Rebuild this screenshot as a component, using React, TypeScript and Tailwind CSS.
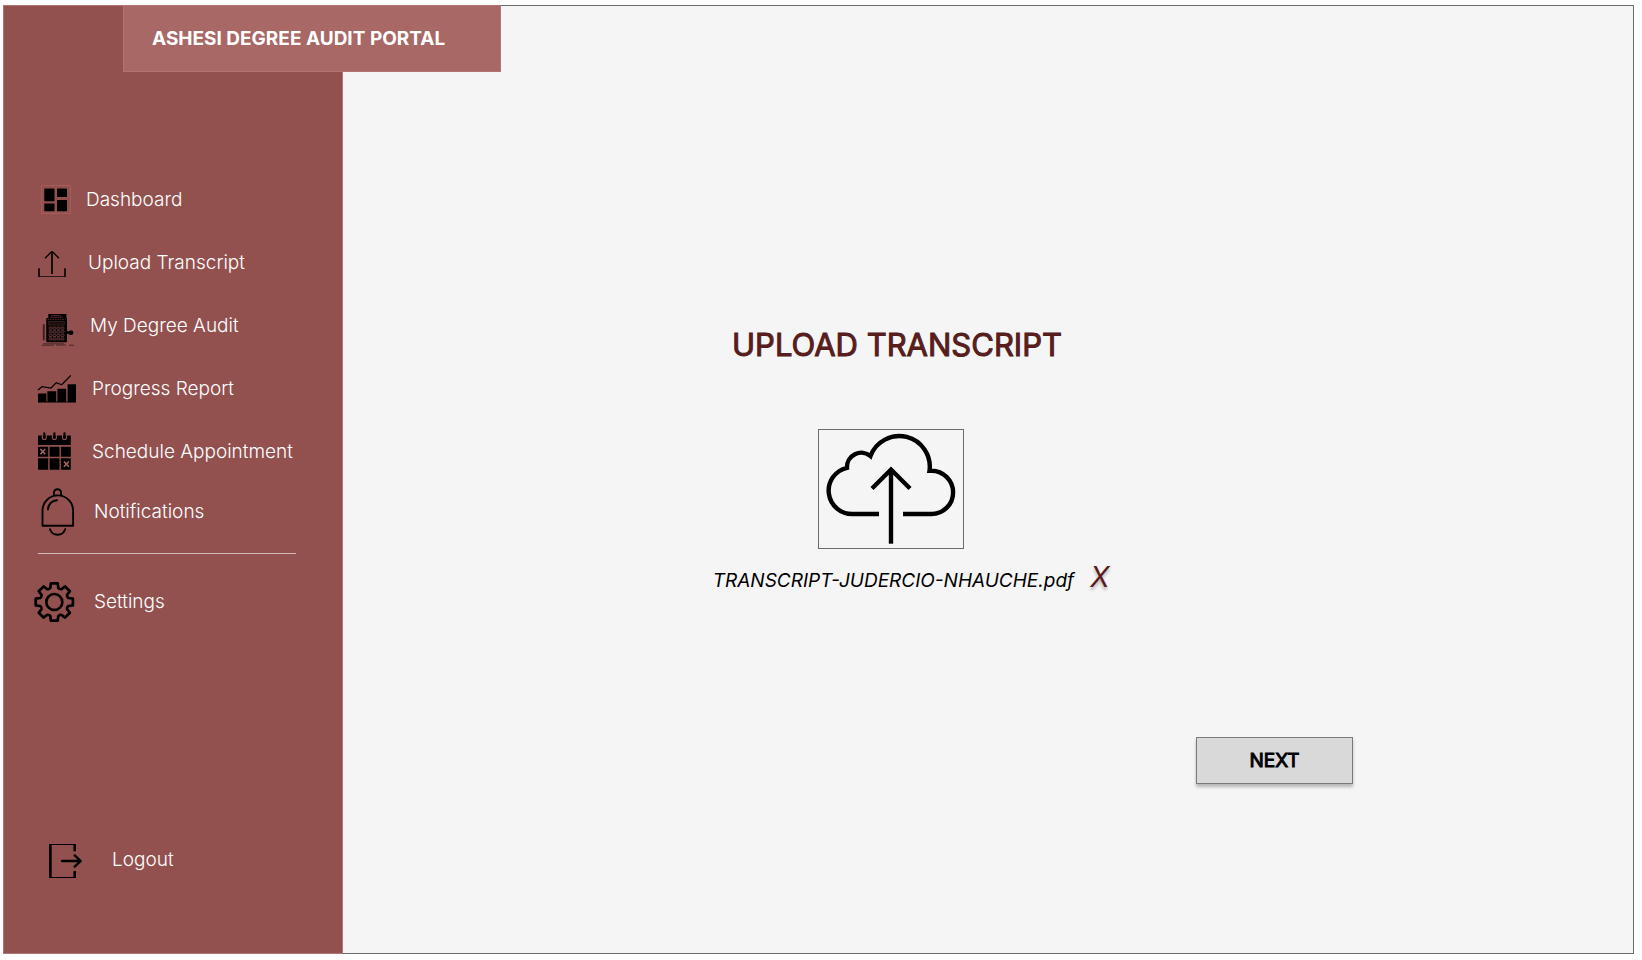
import type { ReactNode } from "react";

function DashboardIcon() {
  return (
    <svg viewBox="0 0 48 48" className="size-12 shrink-0" aria-hidden="true">
      <rect x="9.5" y="9.5" width="29" height="28" fill="none" stroke="#a05e5c" strokeWidth="1" />
      <rect x="12.3" y="12.5" width="10.2" height="12.7" rx="0.6" />
      <rect x="25" y="12.5" width="10" height="8.6" rx="0.6" />
      <rect x="12.3" y="27.6" width="10.2" height="7.6" rx="0.6" />
      <rect x="25" y="24" width="10" height="11.2" rx="0.6" />
    </svg>
  );
}

function UploadIcon() {
  return (
    <svg viewBox="0 0 48 48" className="size-12 shrink-0" fill="none" stroke="#000" aria-hidden="true">
      <path d="M7 29.3V37.8M33 29.3V37.8" strokeWidth="1.6" />
      <path d="M6.3 37.5H33.7" strokeWidth="0.7" />
      <path d="M20 13V35" strokeWidth="1.7" />
      <path d="M13 19.3L19 13.2Q20 12.2 21 13.2L27 19.3" strokeWidth="1.3" />
    </svg>
  );
}

function CalculatorIcon() {
  const columns = [17, 21, 25, 29];
  const rows = [25, 28.6, 32.2, 35.8];
  return (
    <svg viewBox="0 0 48 48" className="size-12 shrink-0" aria-hidden="true">
      <path d="M16.3 12h18.2v5H16.3z" />
      <path d="M19 13.6h10M18 15.2h13" stroke="#6a3a39" strokeWidth="0.7" />
      <rect x="14.2" y="16" width="20.8" height="24.2" rx="1" />
      <path d="M15.5 17.6H33.5" stroke="#92514f" strokeWidth="0.6" strokeDasharray="1.5 1" />
      <rect x="16.8" y="19.5" width="15.4" height="3.6" fill="#1c0f0f" stroke="#5a3130" strokeWidth="0.5" />
      {rows.map((y) =>
        columns.map((x) => (
          <rect key={`${x}-${y}`} x={x} y={y} width="3" height="2.3" rx="0.6" fill="#150a0a" stroke="#92514f" strokeWidth="0.6" />
        )),
      )}
      <path d="M10.8 22.3h1.9v15l-0.9 1.6-1-1.6z" fill="#3a1f1e" />
      <path d="M35 29l2 0.6q0.4-1.1 1.4-1.1h1.8q1.3 0.5 1.2 2.4-0.4 1.6-1.5 2h-1.6q-1 0-1.3-1l-2-0.4z" />
      <path d="M11 41.8H32M10 43.2H22M24 43H34M37 43.2H42" stroke="#2c1717" strokeWidth="0.7" />
    </svg>
  );
}

function ProgressIcon() {
  return (
    <svg viewBox="0 0 48 48" className="size-12 shrink-0" aria-hidden="true">
      <path d="M6 28.5H14.4V37.2H6zM15.4 26.3H24.2V37.2H15.4zM25.4 23.8H34.2V37.2H25.4zM35.6 19.2H44V37.2H35.6z" />
      <path d="M6 36.9H44" stroke="#000" strokeWidth="1" />
      <path d="M6 25L10 21.7L19 23L24.3 17.7L29.7 19.7L38.8 10.3" fill="none" stroke="#000" strokeWidth="1.2" />
    </svg>
  );
}

function CalendarIcon() {
  return (
    <svg viewBox="0 0 48 48" className="size-12 shrink-0" aria-hidden="true">
      <path d="M6 7.5H38.8V17H6z" />
      {[12.3, 22.4, 32.5].map((x) => (
        <g key={x}>
          <path d={`M${x - 2} 7V9.5a2 2 0 0 0 4 0V7`} fill="none" stroke="#92514f" strokeWidth="1.1" />
          <path d={`M${x} 5.2V9.8`} stroke="#000" strokeWidth="2.1" strokeLinecap="round" />
        </g>
      ))}
      <path d="M6 18.7H16.2V28.7H6zM17.6 18.7H27.5V28.7H17.6zM28.9 18.7H38.8V28.7H28.9z" />
      <path d="M6 30.3H16.2V41.7H6zM17.6 30.3H27.5V41.7H17.6zM28.9 30.3H38.8V41.7H28.9z" />
      <path d="M8.4 21L13.2 26.2M13.2 21L8.4 26.2M32 33.5L36.8 38.7M36.8 33.5L32 38.7" stroke="#a86866" strokeWidth="1.5" />
    </svg>
  );
}

function BellIcon() {
  return (
    <svg viewBox="0 0 48 48" className="size-12 shrink-0" fill="none" stroke="#000" strokeWidth="1.9" aria-hidden="true">
      <path d="M10.5 37.7V22.7a15.3 15.3 0 0 1 30.6 0V37.7z" strokeLinejoin="round" />
      <path d="M21.9 7.7V4.8a3.6 3.6 0 0 1 7.2 0V7.7" />
      <path d="M16 21.5a9.3 9.3 0 0 1 9-9.3" strokeLinecap="round" />
      <path d="M18 41.2a8 8 0 0 0 15.2 0" strokeLinecap="round" />
    </svg>
  );
}

const tooth = [
  [-5.4, -13],
  [-4, -14],
  [-3.4, -18.6],
  [3.4, -18.6],
  [4, -14],
  [5.4, -13],
];

const gearPoints = Array.from({ length: 8 }, (_, i) => (i * Math.PI) / 4)
  .flatMap((a) =>
    tooth.map(([x, y]) => {
      const px = 22.3 + x * Math.cos(a) - y * Math.sin(a);
      const py = 24 + x * Math.sin(a) + y * Math.cos(a);
      return `${px.toFixed(2)},${py.toFixed(2)}`;
    }),
  )
  .join(" ");

function GearIcon() {
  return (
    <svg viewBox="0 0 48 48" className="size-12 shrink-0" fill="none" stroke="#000" strokeWidth="2.7" aria-hidden="true">
      <polygon points={gearPoints} strokeLinejoin="round" />
      <circle cx="22.3" cy="24" r="8" />
    </svg>
  );
}

function LogoutIcon() {
  return (
    <svg viewBox="0 0 48 48" className="size-12 shrink-0" fill="none" stroke="#000" aria-hidden="true">
      <path d="M10.4 8V42" strokeWidth="2.6" />
      <path d="M9 8.5H36M9 41.5H36" strokeWidth="1" />
      <path d="M34.7 8V15.3M34.7 35V42" strokeWidth="2.6" />
      <path d="M22 25H40.5" strokeWidth="2.4" strokeLinecap="round" />
      <path d="M34.7 19.4L40.6 25L34.7 30.7" strokeWidth="2.4" strokeLinecap="round" strokeLinejoin="round" />
    </svg>
  );
}

function CloudUploadIcon() {
  return (
    <svg viewBox="0 0 144 118" className="h-full w-full" fill="none" stroke="#000" strokeWidth="4.4" aria-hidden="true">
      <path d="M60 84H34.5A23.4 23.4 0 0 1 28 37.8A14.4 14.4 0 0 1 51.5 26A30.6 30.6 0 0 1 110.5 40.8H112.5A21.6 21.6 0 0 1 112.5 84H84" />
      <path d="M72 113.7V39" />
      <path d="M53 58.5L72 39.5L91 58.5" />
    </svg>
  );
}

type NavItemProps = { label: string; icon: ReactNode; className: string };

function NavItem({ label, icon, className }: NavItemProps) {
  return (
    <a
      href="#"
      className={`flex items-center text-[19px] leading-6 font-light whitespace-nowrap text-white ${className}`}
    >
      {icon}
      <span>{label}</span>
    </a>
  );
}

export default function App() {
  return (
    <div className="flex min-h-screen bg-white pt-[5px] pr-2 pb-[6px] pl-[3px] font-['Inter',sans-serif]">
      <div className="relative flex flex-1 bg-[#f5f5f5]">
        <header className="absolute top-0 left-[120px] flex h-[67px] w-[378px] items-center border border-[#b07472] bg-[#a86866] pl-7">
          <h1 className="text-[19px] leading-6 font-bold whitespace-nowrap text-white">ASHESI DEGREE AUDIT PORTAL</h1>
        </header>

        <nav className="flex w-[340px] shrink-0 flex-col border border-[#b07472] bg-[#92514f] pt-[162px] pb-[69px]">
          <div className="flex flex-col pl-7">
            <NavItem label="Dashboard" icon={<DashboardIcon />} className="h-[63px] gap-1.5" />
            <NavItem label="Upload Transcript" icon={<UploadIcon />} className="h-[63px] gap-2" />
            <NavItem label="My Degree Audit" icon={<CalculatorIcon />} className="h-[63px] gap-2.5" />
            <NavItem label="Progress Report" icon={<ProgressIcon />} className="h-[63px] gap-3" />
            <NavItem label="Schedule Appointment" icon={<CalendarIcon />} className="h-[63px] gap-3" />
            <NavItem label="Notifications" icon={<BellIcon />} className="h-[58px] gap-3.5" />
          </div>
          <hr className="mt-3 mr-[46px] ml-[34px] border-[#d3b9b8]" />
          <NavItem label="Settings" icon={<GearIcon />} className="mt-6 ml-7 gap-3.5" />
          <NavItem label="Logout" icon={<LogoutIcon />} className="mt-auto ml-9 gap-6" />
        </nav>

        <main className="flex flex-1 flex-col border border-l-0 border-[#6b6b6b] pt-[319px]">
          <section className="flex flex-col items-center pr-[182px]">
            <h2 className="text-[31px] leading-10 text-[#641a1a] [-webkit-text-stroke:1px_#4a2020]">UPLOAD TRANSCRIPT</h2>
            <div className="mt-16 pr-3">
              <button type="button" aria-label="Upload file" className="block h-[120px] w-[146px] border border-[#6b6b6b]">
                <CloudUploadIcon />
              </button>
            </div>
            <div className="mt-2.5 flex items-center gap-4 pl-7">
              <p className="pt-2 text-[19px] leading-6 text-black italic">TRANSCRIPT-JUDERCIO-NHAUCHE.pdf</p>
              <button
                type="button"
                aria-label="Remove file"
                className="text-[28px] leading-9 text-[#5a1a1a] italic [text-shadow:0_3px_3px_rgba(0,0,0,0.25)]"
              >
                X
              </button>
            </div>
          </section>
          <button
            type="button"
            className="mt-[142px] mr-[280px] h-[47px] w-[157px] self-end border border-[#7a7a7a] bg-[#d9d9d9] text-[19px] leading-6 text-black shadow-[0_3px_3px_rgba(0,0,0,0.25)] [-webkit-text-stroke:1px_#000]"
          >
            NEXT
          </button>
        </main>
      </div>
    </div>
  );
}
